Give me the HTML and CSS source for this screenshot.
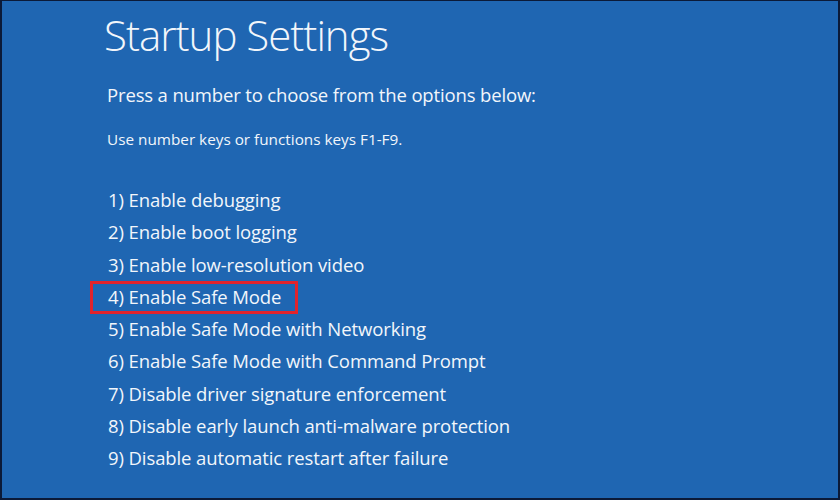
FILE: index.html
```html
<!DOCTYPE html>
<html lang="en">
<head>
<meta charset="UTF-8" />
<title>Startup Settings</title>
<link rel="stylesheet" href="styles.css">
</head>
<body>
  <div class="screen" role="main" aria-label="Startup Settings">
    <h1 class="title">Startup Settings</h1>
    <p class="lead">Press a number to choose from the options below:</p>
    <p class="hint">Use number keys or functions keys F1-F9.</p>
    <ol class="options">
      <li>1) Enable debugging</li>
      <li>2) Enable boot logging</li>
      <li>3) Enable low-resolution video</li>
      <li class="picked">4) Enable Safe Mode</li>
      <li>5) Enable Safe Mode with Networking</li>
      <li>6) Enable Safe Mode with Command Prompt</li>
      <li>7) Disable driver signature enforcement</li>
      <li>8) Disable early launch anti-malware protection</li>
      <li>9) Disable automatic restart after failure</li>
    </ol>
  </div>
</body>
</html>
```

FILE: styles.css
```css
html, body {
  margin: 0;
  padding: 0;
  background: #0b1a38;
}
.screen {
  width: 840px;
  height: 500px;
  box-sizing: border-box;
  border: 2px solid #0b1a38;
  border-top-width: 1px;
  background: #1f66b2;
  color: #f2f6fb;
  font-family: "Open Sans", "Noto Sans", sans-serif;
  padding: 4px 0 0 102px;
  overflow: hidden;
}
.title {
  margin: 0;
  font-size: 42px;
  font-weight: 300;
  letter-spacing: -1px;
  line-height: 60px;
}
.lead {
  margin: 16px 0 0 3px;
  font-size: 18.5px;
  letter-spacing: -0.15px;
  line-height: 28px;
}
.hint {
  margin: 20px 0 0 3px;
  font-size: 15.3px;
  line-height: 20px;
}
.options {
  list-style: none;
  margin: 35px 0 0 4px;
  padding: 0;
  font-size: 18.5px;
  letter-spacing: -0.1px;
  line-height: 32.3px;
}
.options li {
  position: relative;
}
.options .picked::after {
  content: "";
  position: absolute;
  left: -18px;
  top: 0;
  width: 202px;
  height: 27px;
  border: 3px solid #e2232b;
}
```
